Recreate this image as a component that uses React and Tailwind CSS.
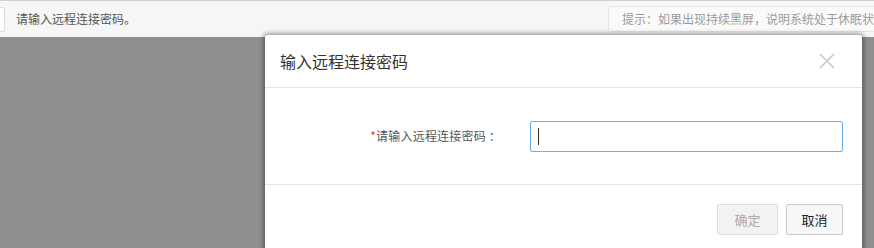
import { useState } from "react";

const font = { fontFamily: '"Noto Sans CJK SC", "Noto Sans", sans-serif' };

function CloseIcon() {
    return (
        <svg width="16" height="16" viewBox="0 0 16 16" fill="none">
            <path d="M1 1L15 15M15 1L1 15" stroke="#c8c8c8" strokeWidth="1.6" />
        </svg>
    );
}

export default function App() {
    const [password, setPassword] = useState("");

    return (
        <div
            className="relative w-[874px] h-[248px] overflow-hidden flex flex-col bg-[#8f8f8f]"
            style={font}
        >
            {/* page toolbar behind the dialog */}
            <div className="h-[37px] shrink-0 flex items-center justify-between bg-[#f6f6f6] border-t border-[#cfcfcf]">
                <div className="flex items-center h-full">
                    <div className="w-[6px] h-[25px] -ml-px border border-[#dcdcdc] rounded-r-[3px] bg-white" />
                    <span className="ml-[11px] text-[12px] text-[#555]">请输入远程连接密码。</span>
                </div>
                <div className="h-[26px] w-[280px] -mr-[14px] flex items-center pl-[13px] bg-[#fafafa] border border-[#e6e6e6] rounded-[3px] text-[12px] text-[#9a9a9a] whitespace-nowrap overflow-hidden">
                    提示：如果出现持续黑屏，说明系统处于休眠状态
                </div>
            </div>
            <div className="flex-1 bg-[#8f8f8f]" />

            {/* dialog */}
            <div className="absolute left-[265px] top-[35px] w-[597px] bg-white rounded-t-[3px] shadow-[0_0_4px_2px_rgba(0,0,0,0.35)]">
                <div className="h-[53px] flex items-center justify-between pl-[15px] pr-[27px] border-b border-[#e5e5e5]">
                    <h3 className="text-[16px] text-[#333] font-normal">输入远程连接密码</h3>
                    <button type="button" className="p-0">
                        <CloseIcon />
                    </button>
                </div>
                <div className="h-[97px] flex items-center border-b border-[#e5e5e5]">
                    <label className="w-[236px] text-right text-[12px] text-[#555] tracking-[0.2px]">
                        <span className="text-[#e33]">*</span>请输入远程连接密码 ：
                    </label>
                    <div className="relative ml-[29px]">
                        <input
                            type="password"
                            value={password}
                            onChange={(e) => setPassword(e.target.value)}
                            className="block w-[313px] h-[31px] px-[8px] border border-[#66afe9] rounded-[2px] outline-none text-[12px]"
                        />
                        {password === "" && (
                            <span className="absolute left-[8px] top-[7px] w-px h-[17px] bg-[#333] pointer-events-none" />
                        )}
                    </div>
                </div>
                <div className="flex justify-end gap-[8px] pt-[19px] pr-[19px] pb-[20px]">
                    <button
                        type="button"
                        disabled
                        className="w-[61px] h-[31px] text-[13px] text-[#aaa] bg-[#f2f2f2] border border-[#dedede] rounded-[2px]"
                    >
                        确定
                    </button>
                    <button
                        type="button"
                        className="w-[57px] h-[31px] text-[13px] text-[#222] bg-[#f7f7f7] border border-[#c8c8c8] rounded-[2px]"
                    >
                        取消
                    </button>
                </div>
            </div>
        </div>
    );
}
